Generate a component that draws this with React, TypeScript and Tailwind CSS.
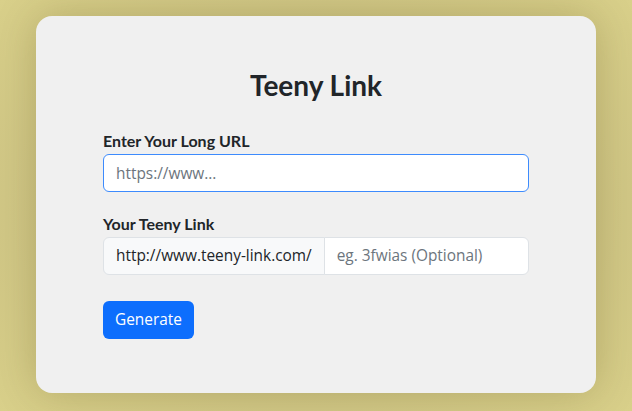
export default function App() {
  return (
    <div className="min-h-[411px] w-full bg-[radial-gradient(ellipse_at_center,#c3ba80_0%,#cdc384_55%,#d9d08a_100%)] pt-4">
      <div className="mx-auto w-[560px] rounded-2xl bg-[#f0f0f0] px-[67px] pb-[54px] pt-[52px] shadow-[0_0_40px_rgba(90,80,20,0.25)]">
        <h1 className="text-center text-[28px] leading-[34px] font-bold text-[#212529] [font-family:Lato,sans-serif]">
          Teeny Link
        </h1>

        <div className="mt-[27px]">
          <label className="block text-base leading-6 font-bold text-[#212529] [font-family:Lato,sans-serif]">
            Enter Your Long URL
          </label>
          <input
            className="mt-px block h-[38px] w-full rounded-md border border-[#3d8bfd] bg-white px-3 text-[15.4px] text-[#212529] outline-none placeholder:text-[#6c757d] [font-family:'Open_Sans',sans-serif]"
            placeholder="https://www..."
          />
        </div>

        <div className="mt-5">
          <label className="block text-base leading-6 font-bold text-[#212529] [font-family:Lato,sans-serif]">
            Your Teeny Link
          </label>
          <div className="mt-px flex h-[38px] w-full [font-family:'Open_Sans',sans-serif]">
            <span className="flex items-center rounded-l-md border border-[#dee2e6] bg-[#f8f9fa] px-3 text-[15.4px] text-[#212529]">
              http://www.teeny-link.com/
            </span>
            <input
              className="-ml-px min-w-0 flex-1 rounded-r-md border border-[#dee2e6] bg-white px-3 text-[15.4px] text-[#212529] outline-none placeholder:text-[#6c757d]"
              placeholder="eg. 3fwias (Optional)"
            />
          </div>
        </div>

        <button className="mt-[26px] h-[38px] rounded-md bg-[#0d6efd] px-3 text-[15.4px] text-white [font-family:'Open_Sans',sans-serif]">
          Generate
        </button>
      </div>
    </div>
  )
}
